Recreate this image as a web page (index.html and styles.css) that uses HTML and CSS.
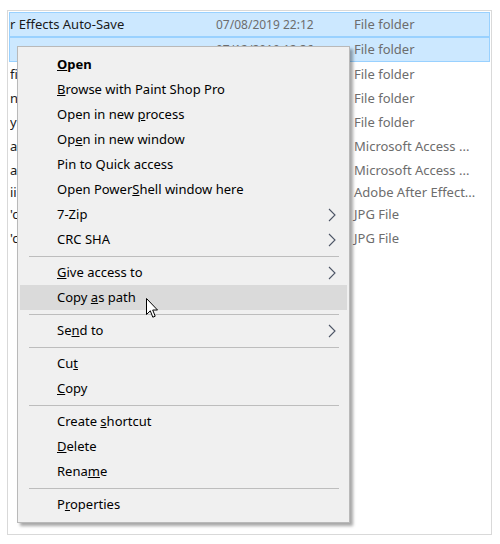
FILE: index.html
```html
<!DOCTYPE html>
<html>
<head>
    <title>Explorer Context Menu</title>
    <link rel="stylesheet" href="styles.css">
</head>
<body>
    <div class="window">
        <div class="list">
            <div class="row selected">
                <span class="name">r Effects Auto-Save</span>
                <span class="date">07/08/2019 22:12</span>
                <span class="type">File folder</span>
            </div>
            <div class="row selected">
                <span class="name"></span>
                <span class="date">07/12/2019 12:36</span>
                <span class="type">File folder</span>
            </div>
            <div class="row">
                <span class="name">fi</span>
                <span class="date"></span>
                <span class="type">File folder</span>
            </div>
            <div class="row">
                <span class="name">n</span>
                <span class="date"></span>
                <span class="type">File folder</span>
            </div>
            <div class="row">
                <span class="name">y</span>
                <span class="date"></span>
                <span class="type">File folder</span>
            </div>
            <div class="row">
                <span class="name">ac</span>
                <span class="date"></span>
                <span class="type">Microsoft Access ...</span>
            </div>
            <div class="row">
                <span class="name">ac</span>
                <span class="date"></span>
                <span class="type">Microsoft Access ...</span>
            </div>
            <div class="row short">
                <span class="name">ii</span>
                <span class="date"></span>
                <span class="type">Adobe After Effect...</span>
            </div>
            <div class="row">
                <span class="name">'c</span>
                <span class="date"></span>
                <span class="type">JPG File</span>
            </div>
            <div class="row">
                <span class="name">'c</span>
                <span class="date"></span>
                <span class="type">JPG File</span>
            </div>
        </div>

        <div class="menu">
            <div class="item bold"><u>O</u>pen</div>
            <div class="item"><u>B</u>rowse with Paint Shop Pro</div>
            <div class="item">Open in new <u>p</u>rocess</div>
            <div class="item">Op<u>e</u>n in new window</div>
            <div class="item">Pin to Quick access</div>
            <div class="item">Open Power<u>S</u>hell window here</div>
            <div class="item">7-Zip
                <svg class="arrow" width="8" height="14" viewBox="0 0 8 14"><polyline points="1,1 7,7 1,13" fill="none" stroke="#4d5566" stroke-width="1.1"/></svg>
            </div>
            <div class="item">CRC SHA
                <svg class="arrow" width="8" height="14" viewBox="0 0 8 14"><polyline points="1,1 7,7 1,13" fill="none" stroke="#4d5566" stroke-width="1.1"/></svg>
            </div>
            <div class="sep"></div>
            <div class="item"><u>G</u>ive access to
                <svg class="arrow" width="8" height="14" viewBox="0 0 8 14"><polyline points="1,1 7,7 1,13" fill="none" stroke="#4d5566" stroke-width="1.1"/></svg>
            </div>
            <div class="item hover">Copy <u>a</u>s path
                <svg class="cursor" width="13" height="21" viewBox="0 0 13 21">
                    <path d="M0.5 0.5 L0.5 16.5 L4.3 12.8 L6.8 19.2 L9.2 18.2 L6.7 12 L11.5 12 Z" fill="#fff" stroke="#000" stroke-width="1"/>
                </svg>
            </div>
            <div class="sep"></div>
            <div class="item">Se<u>n</u>d to
                <svg class="arrow" width="8" height="14" viewBox="0 0 8 14"><polyline points="1,1 7,7 1,13" fill="none" stroke="#4d5566" stroke-width="1.1"/></svg>
            </div>
            <div class="sep"></div>
            <div class="item">Cu<u>t</u></div>
            <div class="item"><u>C</u>opy</div>
            <div class="sep"></div>
            <div class="item">Create <u>s</u>hortcut</div>
            <div class="item"><u>D</u>elete</div>
            <div class="item">Rena<u>m</u>e</div>
            <div class="sep"></div>
            <div class="item">P<u>r</u>operties</div>
        </div>
    </div>
</body>
</html>
```

FILE: styles.css
```css
body {
    margin: 0;
    background: #ffffff;
    font-family: 'Noto Sans', 'Open Sans', sans-serif;
    font-size: 13px;
    color: #000;
}
.window {
    position: relative;
    margin: 10px 0 0 7px;
    width: 483px;
    height: 523px;
    border: 1px solid #d9d9d9;
    background: #fff;
    overflow: hidden;
}
.list {
    padding: 1px 1px 0 1px;
}
.row {
    display: flex;
    height: 24px;
    line-height: 22px;
    border: 1px solid transparent;
    box-sizing: border-box;
    white-space: nowrap;
}
.row.short {
    height: 20px;
    line-height: 18px;
}
.row.selected {
    height: 25px;
    line-height: 23px;
    background: #cce8ff;
    border-color: #99d1ff;
}
.name {
    width: 206px;
    overflow: hidden;
    color: #1a1a1a;
}
.date {
    width: 138px;
    font-size: 12px;
    color: #6d6d6d;
}
.type {
    color: #6d6d6d;
}
.menu {
    position: absolute;
    left: 9px;
    top: 35px;
    width: 331px;
    padding: 5px 0;
    background: #f0f0f0;
    border: 1px solid #b9b9b9;
    box-shadow: 3px 3px 3px rgba(0, 0, 0, 0.35);
}
.item {
    position: relative;
    height: 25px;
    line-height: 25px;
    margin: 0 2px;
    padding-left: 37px;
    white-space: nowrap;
}
.item.bold {
    font-weight: bold;
}
.item.hover {
    background: #dadada;
}
.arrow {
    position: absolute;
    right: 11px;
    top: 6px;
}
.sep {
    height: 1px;
    margin: 4px 10px 3px 11px;
    background: #bdbdbd;
}
.cursor {
    position: absolute;
    left: 126px;
    top: 13px;
}
```
